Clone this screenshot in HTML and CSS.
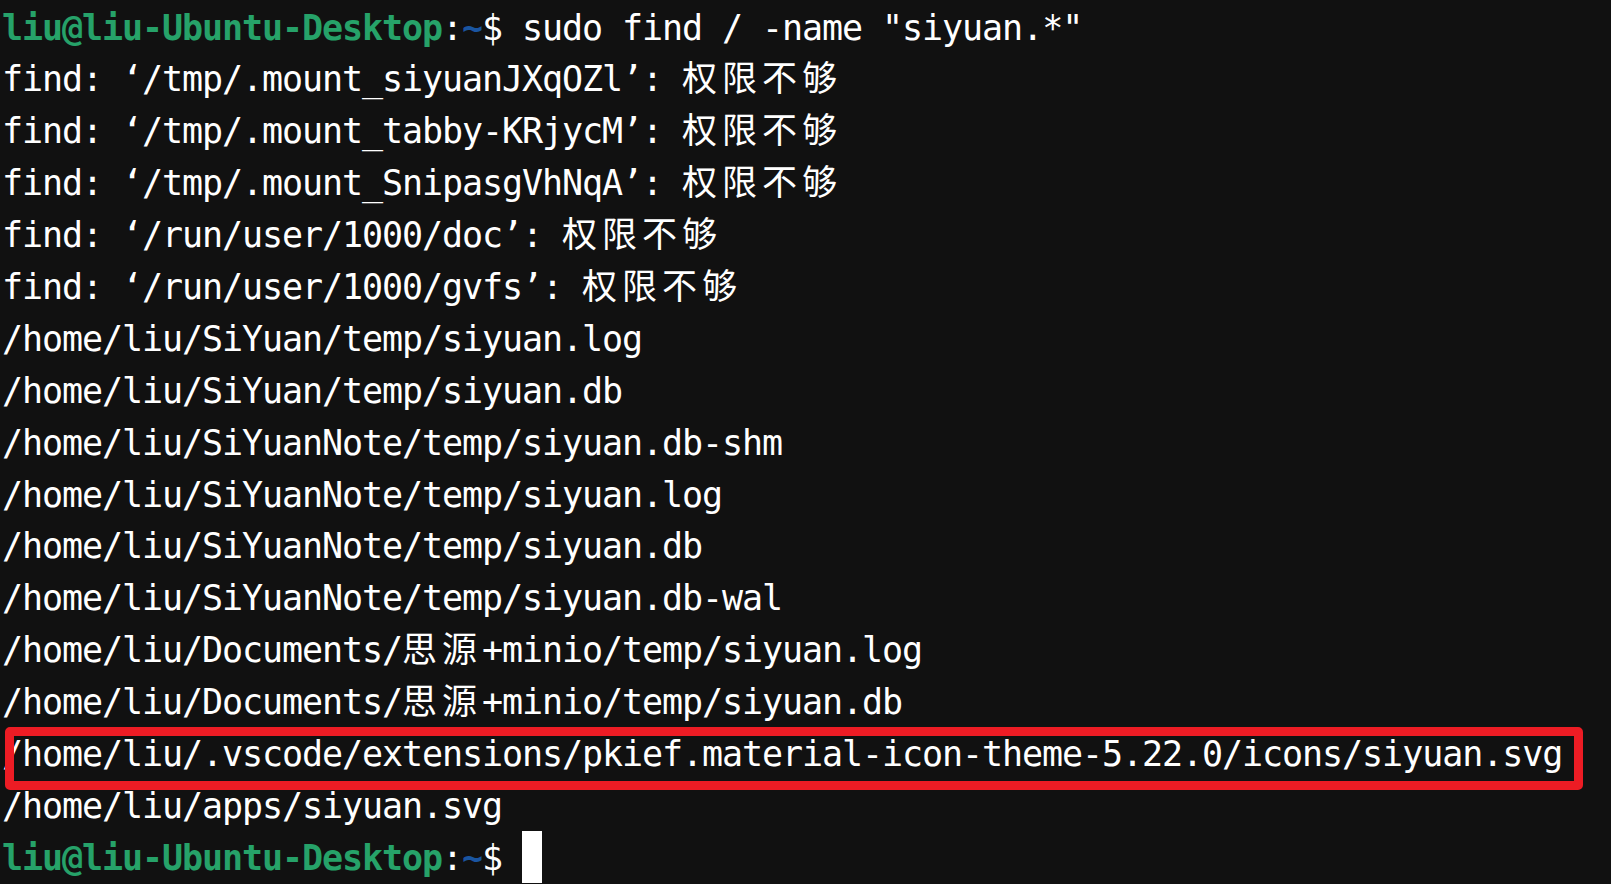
FILE: index.html
```html
<!DOCTYPE html>
<html lang="zh-CN">
<head>
  <meta charset="UTF-8" />
  <meta name="viewport" content="width=device-width, initial-scale=1.0"/>
  <title>Terminal</title>
  <link rel="stylesheet" href="styles.css">
</head>
<body>

  <main class="term">
    <div class="line"><span class="user">liu@liu-Ubuntu-Desktop</span>:<span class="cwd">~</span>$ sudo find / -name "siyuan.*"</div>
    <div class="line">find: ‘/tmp/.mount_siyuanJXqOZl’: <span class="cjk">权限不够</span></div>
    <div class="line">find: ‘/tmp/.mount_tabby-KRjycM’: <span class="cjk">权限不够</span></div>
    <div class="line">find: ‘/tmp/.mount_SnipasgVhNqA’: <span class="cjk">权限不够</span></div>
    <div class="line">find: ‘/run/user/1000/doc’: <span class="cjk">权限不够</span></div>
    <div class="line">find: ‘/run/user/1000/gvfs’: <span class="cjk">权限不够</span></div>
    <div class="line">/home/liu/SiYuan/temp/siyuan.log</div>
    <div class="line">/home/liu/SiYuan/temp/siyuan.db</div>
    <div class="line">/home/liu/SiYuanNote/temp/siyuan.db-shm</div>
    <div class="line">/home/liu/SiYuanNote/temp/siyuan.log</div>
    <div class="line">/home/liu/SiYuanNote/temp/siyuan.db</div>
    <div class="line">/home/liu/SiYuanNote/temp/siyuan.db-wal</div>
    <div class="line">/home/liu/Documents/<span class="cjk">思源</span>+minio/temp/siyuan.log</div>
    <div class="line">/home/liu/Documents/<span class="cjk">思源</span>+minio/temp/siyuan.db</div>
    <!-- ligne encadrée en rouge -->
    <div class="line mark">/home/liu/.vscode/extensions/pkief.material-icon-theme-5.22.0/icons/siyuan.svg</div>
    <div class="line">/home/liu/apps/siyuan.svg</div>
    <div class="line"><span class="user">liu@liu-Ubuntu-Desktop</span>:<span class="cwd">~</span>$ <span class="cursor"></span></div>
  </main>

</body>
</html>
```

FILE: styles.css
```css
/* Reset */
*, *::before, *::after {
  margin: 0;
  padding: 0;
  box-sizing: border-box;
}
html, body {
  width: 100vw;
  height: 100vh;
  overflow: hidden;
}
body {
  background-color: #111;
  color: #fff;
}

/* Terminal : cellules de 20px x 51.9px */
.term {
  padding: 0.5px 0 0 2px;
  font-family: 'DejaVu Sans Mono', 'Noto Sans CJK SC', monospace;
  font-size: 35px;
  letter-spacing: -1.07px;
}
.line {
  height: 51.9px;
  line-height: 54.9px;
  white-space: pre;
}

/* Prompt */
.user {
  color: #26a269;
  font-weight: bold;
}
.cwd {
  color: #1a55a0;
  font-weight: bold;
}
.cursor {
  display: inline-block;
  width: 20px;
  height: 51.9px;
  vertical-align: top;
  background-color: #fff;
}

/* Caractères chinois : double largeur */
.cjk {
  font-family: 'Noto Sans CJK SC', sans-serif;
  letter-spacing: 5px;
  line-height: 1;
}

/* Encadré rouge */
.mark {
  position: relative;
}
.mark::after {
  content: '';
  position: absolute;
  left: 3px;
  top: -0.4px;
  width: 1578px;
  height: 63px;
  border: 9px solid #ed1c24;
  border-radius: 5px;
}
```
